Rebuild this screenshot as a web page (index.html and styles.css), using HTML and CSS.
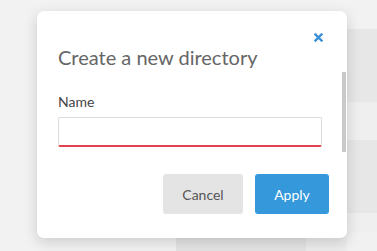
FILE: index.html
```html
<!DOCTYPE html>
<html lang="en">
<head>
    <meta charset="UTF-8">
    <meta name="viewport" content="width=device-width, initial-scale=1.0">
    <title>Create a new directory</title>
    <link rel="stylesheet" href="styles.css">
</head>
<body>
    <div class="page">
        <div class="page-main">
            <div class="strip">
                <div class="strip-cell dark"></div>
                <div class="strip-cell light"></div>
            </div>
        </div>
        <div class="page-side">
            <div class="row row-top"></div>
            <div class="row row-a"></div>
            <div class="row row-b"></div>
            <div class="row row-c"></div>
            <div class="row row-d"></div>
            <div class="row row-end"></div>
        </div>
    </div>

    <div class="modal">
        <div class="modal-scroll"></div>
        <div class="modal-head">
            <button class="modal-close" aria-label="Close">
                <svg width="9" height="9" viewBox="0 0 9 9">
                    <path d="M1.5 1.5 L7.5 7.5 M7.5 1.5 L1.5 7.5" stroke="#3a8fd6" stroke-width="2.4" stroke-linecap="square"/>
                </svg>
            </button>
        </div>
        <h2 class="modal-title">Create a new directory</h2>
        <label class="field-label" for="dirName">Name</label>
        <input class="field-input" id="dirName" type="text">
        <div class="modal-actions">
            <button class="btn btn-cancel">Cancel</button>
            <button class="btn btn-apply">Apply</button>
        </div>
    </div>
</body>
</html>
```

FILE: styles.css
```css
* {
    box-sizing: border-box;
}

body {
    margin: 0;
    font-family: 'Lato', 'Liberation Sans', sans-serif;
    background: #f2f2f2;
    width: 377px;
    height: 251px;
    overflow: hidden;
}

/* background page, dimmed behind the dialog */
.page {
    display: flex;
    height: 251px;
}

.page-main {
    flex: 1;
    display: flex;
    flex-direction: column;
    justify-content: flex-end;
}

.strip {
    display: flex;
    height: 13px;
    padding-left: 176px;
}

.strip-cell.dark {
    width: 130px;
    background: #e4e4e4;
}

.strip-cell.light {
    width: 41px;
    background: #ececec;
}

.page-side {
    width: 30px;
    display: flex;
    flex-direction: column;
}

.row-top { height: 29px; background: #f2f2f2; }
.row-a { height: 73px; background: #e7e7e7; }
.row-b { height: 38px; background: #efefef; }
.row-c { height: 73px; background: #e7e7e7; }
.row-d { height: 19px; background: #efefef; }
.row-end { flex: 1; background: #f1f1f1; }

/* dialog */
.modal {
    position: absolute;
    left: 37px;
    top: 11px;
    width: 310px;
    height: 227px;
    background: #fff;
    border-radius: 7px;
    box-shadow: 0 4px 14px rgba(0,0,0,0.16);
    padding: 0 18px 0 21px;
}

.modal-scroll {
    position: absolute;
    right: 1px;
    top: 61px;
    width: 4px;
    height: 80px;
    background: #c9c9c9;
}

.modal-head {
    display: flex;
    justify-content: flex-end;
    height: 34px;
    padding-top: 22px;
    padding-right: 6px;
}

.modal-close {
    border: 0;
    background: none;
    padding: 0;
    width: 9px;
    height: 9px;
    display: flex;
}

.modal-title {
    margin: 0;
    font-size: 20px;
    font-weight: normal;
    color: #666;
    line-height: 24px;
}

.field-label {
    display: block;
    margin-top: 24px;
    font-size: 14px;
    color: #444;
    line-height: 17px;
}

.field-input {
    display: block;
    margin-top: 7px;
    width: 264px;
    height: 30px;
    border: 1px solid #dcdcdc;
    border-bottom: 2px solid #e0434f;
    border-radius: 2px;
    outline: none;
}

.modal-actions {
    display: flex;
    justify-content: flex-end;
    gap: 12px;
    margin-top: 27px;
}

.btn {
    height: 40px;
    border: 0;
    border-radius: 3px;
    font-family: 'Lato', 'Liberation Sans', sans-serif;
    font-size: 14px;
}

.btn-cancel {
    width: 80px;
    background: #e4e4e4;
    color: #555;
}

.btn-apply {
    width: 74px;
    background: #3498db;
    color: #fff;
}
```
